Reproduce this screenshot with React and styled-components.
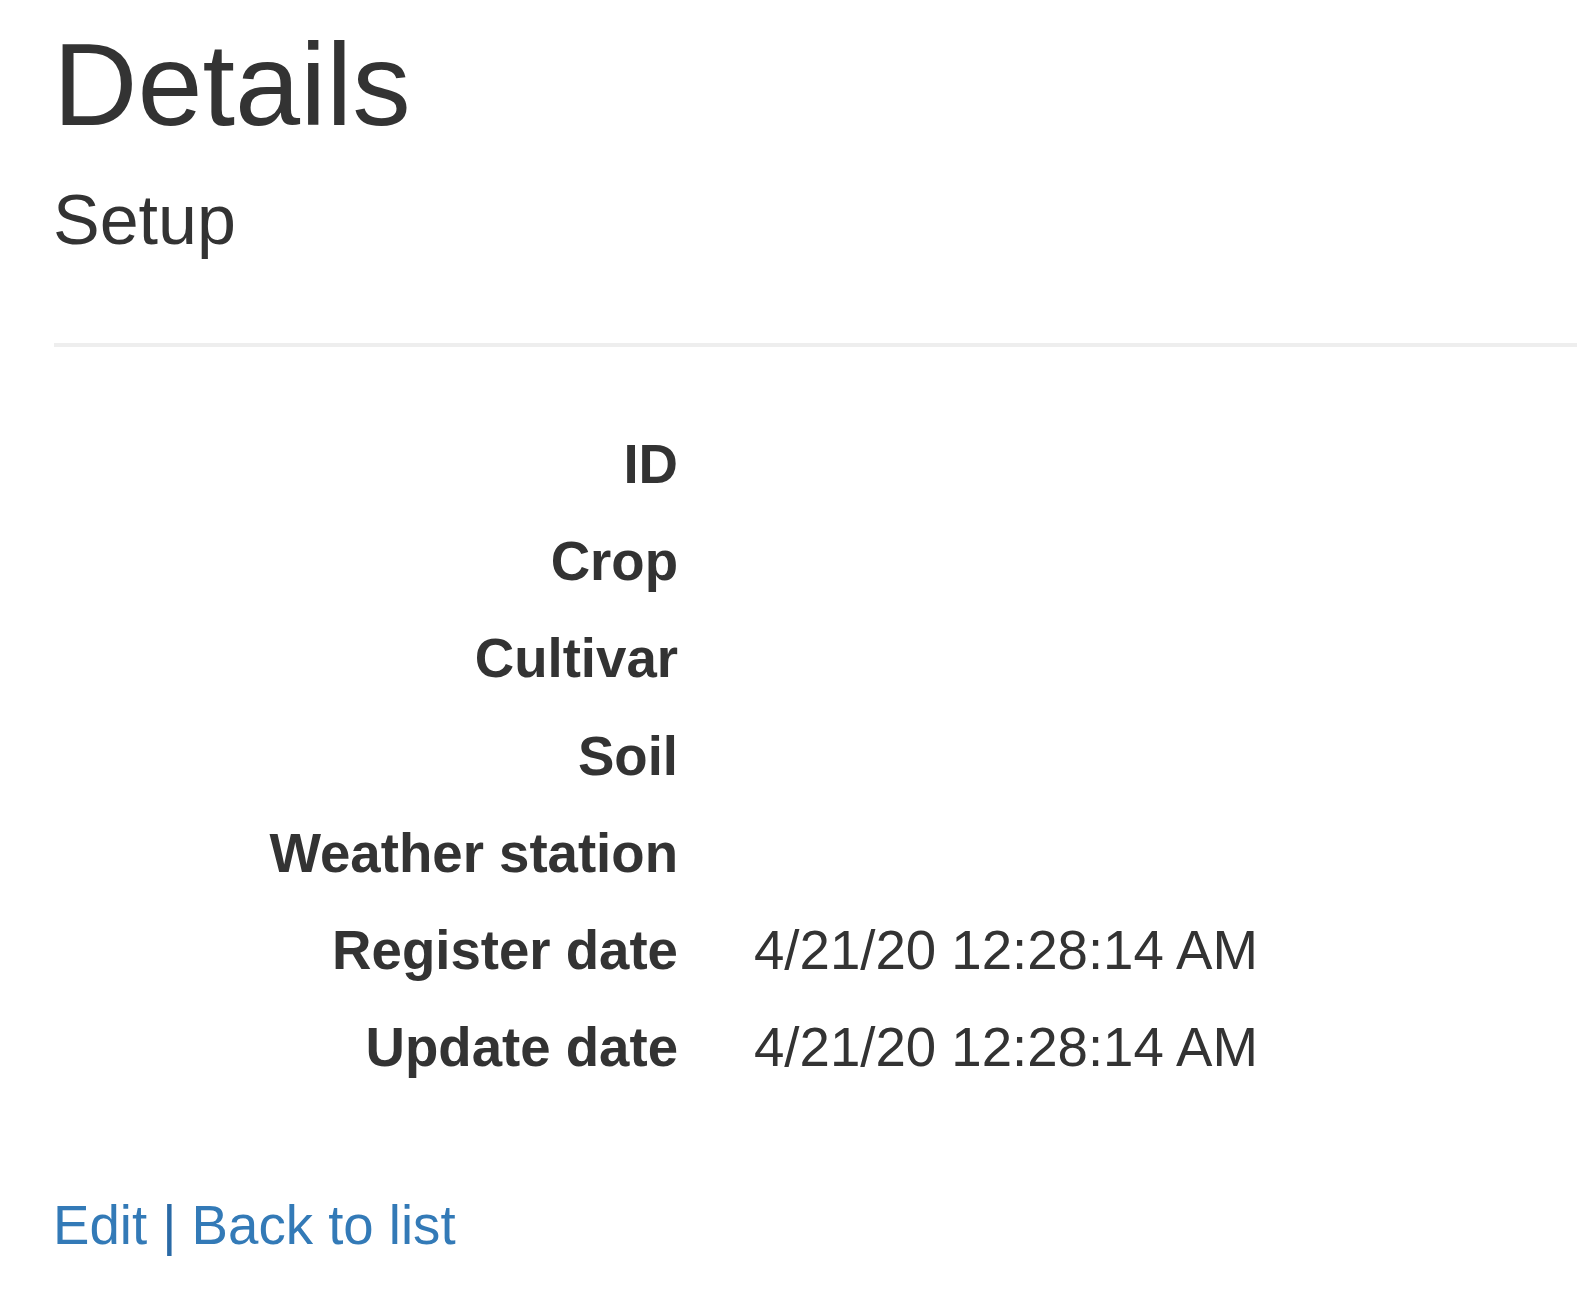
import React from 'react'
import styled, { createGlobalStyle } from 'styled-components'

const GlobalStyle = createGlobalStyle`
  html, body {
    margin: 0;
    padding: 0;
    background: #fff;
  }
  body {
    font-family: "Liberation Sans", Arial, Helvetica, sans-serif;
    color: #333;
    font-size: 54.6px;
  }
`;

const fields = [
  { label: 'ID', value: '' },
  { label: 'Crop', value: '' },
  { label: 'Cultivar', value: '' },
  { label: 'Soil', value: '' },
  { label: 'Weather station', value: '' },
  { label: 'Register date', value: '4/21/20 12:28:14 AM' },
  { label: 'Update date', value: '4/21/20 12:28:14 AM' },
]

const App = () => {
  return (
    <Page>
      <GlobalStyle />
      <Title>Details</Title>
      <Subtitle>Setup</Subtitle>
      <Rule />
      <DetailList>
        {fields.map((f) => (
          <React.Fragment key={f.label}>
            <Term>{f.label}</Term>
            <Desc>{f.value}</Desc>
          </React.Fragment>
        ))}
      </DetailList>
      <Actions>
        <Link href="#">Edit</Link>
        <Sep> | </Sep>
        <Link href="#">Back to list</Link>
      </Actions>
    </Page>
  )
}

const Page = styled.div`
  padding: 0 0 0 53px;
  overflow: hidden;
`;

const Title = styled.h2`
  font-size: 117px;
  font-weight: 500;
  line-height: 129px;
  margin: 20px 0 0;
`;

const Subtitle = styled.h4`
  font-size: 70px;
  font-weight: 500;
  line-height: 77px;
  margin: 33px 0 0;
`;

const Rule = styled.hr`
  border: 0;
  border-top: 4px solid #eee;
  margin: 84px -60px 0 1px;
`;

const DetailList = styled.dl`
  display: grid;
  grid-template-columns: 625px 1fr;
  column-gap: 76px;
  margin: 69px 0 0;
  line-height: 97.2px;
`;

const Term = styled.dt`
  font-weight: 700;
  text-align: right;
  white-space: nowrap;
  height: 97.2px;
`;

const Desc = styled.dd`
  margin: 0;
  height: 97.2px;
`;

const Actions = styled.p`
  margin: 91px 0 0;
  line-height: 77px;
`;

const Link = styled.a`
  color: #337ab7;
  text-decoration: none;
`;

const Sep = styled.span`
  color: #2a6aa6;
`;

export default App;
